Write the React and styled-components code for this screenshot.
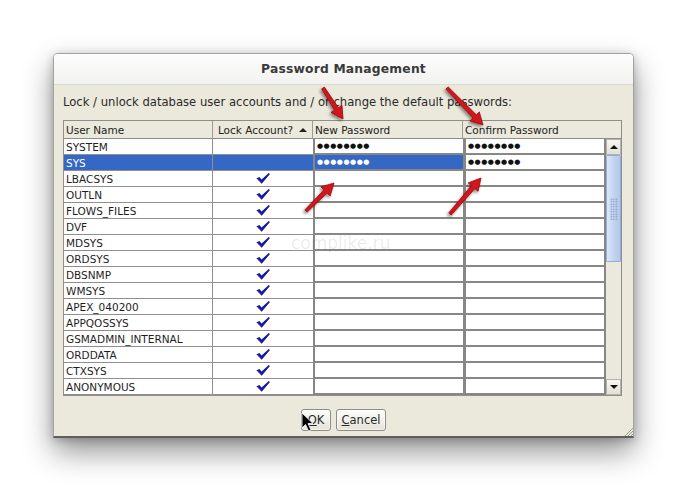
import React from "react"
import styled, { createGlobalStyle } from "styled-components"

const GlobalStyle = createGlobalStyle`
  html, body {
    margin: 0;
    padding: 0;
    background: #fff;
  }
  body {
    font-family: "DejaVu Sans", "Noto Sans", sans-serif;
    color: #222;
  }
`

const Stage = styled.div`
  position: relative;
  width: 688px;
  height: 491px;
  padding: 53px 0 0 53px;
  box-sizing: border-box;
  overflow: hidden;
`

const Window = styled.div`
  position: relative;
  width: 581px;
  height: 385px;
  box-sizing: border-box;
  display: flex;
  flex-direction: column;
  border: 1px solid #a2a2a0;
  border-bottom: 2px solid #5e5e5c;
  border-radius: 5px 5px 0 0;
  box-shadow: 0 14px 30px rgba(0, 0, 0, 0.42), 0 2px 10px rgba(0, 0, 0, 0.22);
  overflow: hidden;
`

const TitleBar = styled.div`
  height: 30px;
  flex: 0 0 30px;
  display: flex;
  align-items: center;
  justify-content: center;
  background: linear-gradient(#fdfdfd, #f2f2f0);
  border-bottom: 1px solid #dcdad0;
  font-size: 12.3px;
  font-weight: bold;
  color: #3a3a3a;
  letter-spacing: 0.2px;
`

const Body = styled.div`
  flex: 1;
  display: flex;
  flex-direction: column;
  background: #ebe9dc;
  padding: 10px 10px 0 9px;
`

const Intro = styled.div`
  font-size: 11.6px;
  line-height: 14px;
  color: #2a2a2a;
  margin-bottom: 11px;
`

const Table = styled.div`
  width: 559px;
  box-sizing: border-box;
  border: 1px solid #8e8e8c;
  background: #fff;
`

const Header = styled.div`
  display: grid;
  grid-template-columns: 149px 100px 150px 1fr;
  height: 17px;
  background: #ebe9dc;
  border-bottom: 1px solid #8e8e8c;
`

const HeadCell = styled.div`
  display: flex;
  align-items: center;
  justify-content: ${p => (p.$center ? "center" : "flex-start")};
  gap: 6px;
  padding-left: ${p => (p.$center ? "0" : "2px")};
  font-size: 10.5px;
  color: #222;
  border-right: ${p => (p.$last ? "none" : "1px solid #9c9c98")};
  white-space: nowrap;
  overflow: hidden;
`

const SortUp = styled.span`
  width: 0;
  height: 0;
  border-left: 4px solid transparent;
  border-right: 4px solid transparent;
  border-bottom: 4px solid #222;
`

const BodyArea = styled.div`
  display: flex;
`

const Rows = styled.div`
  flex: 1;
  display: grid;
  grid-template-columns: 149px 100px 150px 1fr;
  grid-auto-rows: 16px;
`

const Cell = styled.div`
  box-sizing: border-box;
  display: flex;
  align-items: center;
  justify-content: ${p => (p.$center ? "center" : "flex-start")};
  padding-left: ${p => (p.$center ? "0" : "2px")};
  font-size: 10.5px;
  color: ${p => (p.$selected ? "#fff" : "#1e1e1e")};
  background: ${p => (p.$selected ? "#3567c4" : "#fff")};
  border-bottom: 1px solid #8f8f8d;
  border-right: ${p => (p.$noRight ? "none" : "1px solid #8f8f8d")};
  white-space: nowrap;
`

const PassCell = styled.div`
  box-sizing: border-box;
  display: flex;
  align-items: center;
  padding-left: 2px;
  background: ${p => (p.$selected ? "#3567c4" : "#fff")};
  color: ${p => (p.$selected ? "#fff" : "#111")};
  border-bottom: 2px solid #878785;
  border-left: ${p => p.$left}px solid #878785;
  border-right: ${p => p.$right}px solid #878785;
`

const Dots = styled.span`
  font-size: 7px;
  letter-spacing: 0.5px;
  line-height: 1;
`

const Scrollbar = styled.div`
  width: 15px;
  display: flex;
  flex-direction: column;
  background: #ecebe3;
`

const ScrollButton = styled.div`
  height: 16px;
  flex: 0 0 16px;
  box-sizing: border-box;
  display: flex;
  align-items: center;
  justify-content: center;
  background: linear-gradient(#f7f6f1, #e3e1d6);
  border: 1px solid #b6b4aa;
`

const Arrow = styled.span`
  width: 0;
  height: 0;
  border-left: 4px solid transparent;
  border-right: 4px solid transparent;
  ${p =>
    p.$down
      ? "border-top: 4px solid #111;"
      : "border-bottom: 4px solid #111;"}
`

const Thumb = styled.div`
  height: 107px;
  flex: 0 0 107px;
  box-sizing: border-box;
  display: flex;
  align-items: center;
  justify-content: center;
  background: linear-gradient(to right, #dde7f7, #bfd1ef 60%, #b4c8ec);
  border: 1px solid #94acd6;
  border-radius: 1px;
`

const Grip = styled.div`
  width: 8px;
  height: 22px;
  background-image: radial-gradient(#8ea6cf 0.7px, transparent 1px);
  background-size: 2.5px 2.5px;
`

const Track = styled.div`
  flex: 1;
  background: #ebe9de;
`

const ButtonRow = styled.div`
  display: flex;
  justify-content: center;
  gap: 5px;
  margin-top: 13px;
  padding-left: 1px;
`

const Button = styled.button`
  height: 22px;
  width: ${p => p.$w}px;
  padding: 0;
  font-family: "DejaVu Sans", sans-serif;
  font-size: 11.5px;
  color: #2a2a2a;
  background: linear-gradient(#fdfdfb, #e5e3d9);
  border: 1px solid #8c8b86;
  border-radius: 3px;
  box-shadow: inset 0 0 0 1px rgba(255, 255, 255, 0.6);
  u {
    text-decoration: underline;
  }
`

const Grab = styled.svg`
  position: absolute;
  right: 0;
  bottom: 0;
`

const Overlay = styled.svg`
  position: absolute;
  left: 0;
  top: 0;
  pointer-events: none;
`

const Watermark = styled.div`
  position: absolute;
  left: 291px;
  top: 233px;
  font-size: 17px;
  color: rgba(0, 0, 0, 0.09);
  pointer-events: none;
`

const users = [
  "SYSTEM",
  "SYS",
  "LBACSYS",
  "OUTLN",
  "FLOWS_FILES",
  "DVF",
  "MDSYS",
  "ORDSYS",
  "DBSNMP",
  "WMSYS",
  "APEX_040200",
  "APPQOSSYS",
  "GSMADMIN_INTERNAL",
  "ORDDATA",
  "CTXSYS",
  "ANONYMOUS",
]

function Check() {
  return (
    <svg width="14" height="11" viewBox="0 0 14 11">
      <path d="M0.4 5.3 L3.4 3.9 L5.6 6.6 L12.7 0 L14 1.1 L5.7 10.8 Z" fill="#1b1b9e" />
    </svg>
  )
}

function arrowPoints(x1, y1, x2, y2) {
  const dx = x2 - x1
  const dy = y2 - y1
  const len = Math.hypot(dx, dy)
  const ux = dx / len
  const uy = dy / len
  const nx = -uy
  const ny = ux
  const head = 12
  const hw = 6.5
  const sw = 2.3
  const bx = x2 - ux * head
  const by = y2 - uy * head
  const pts = [
    [x1 + nx * sw * 0.7, y1 + ny * sw * 0.7],
    [bx + nx * sw, by + ny * sw],
    [bx + nx * hw, by + ny * hw],
    [x2, y2],
    [bx - nx * hw, by - ny * hw],
    [bx - nx * sw, by - ny * sw],
    [x1 - nx * sw * 0.7, y1 - ny * sw * 0.7],
  ]
  return pts.map(p => p.map(v => v.toFixed(1)).join(",")).join(" ")
}

const arrows = [
  [323, 88, 343, 119],
  [447, 88, 483, 125],
  [306, 211, 334, 183],
  [450, 214, 481, 178],
]

export default function App() {
  return (
    <Stage>
      <GlobalStyle />
      <Window>
        <TitleBar>Password Management</TitleBar>
        <Body>
          <Intro>
            Lock / unlock database user accounts and / or change the default passwords:
          </Intro>
          <Table>
            <Header>
              <HeadCell>User Name</HeadCell>
              <HeadCell $center>
                Lock Account? <SortUp />
              </HeadCell>
              <HeadCell>New Password</HeadCell>
              <HeadCell $last>Confirm Password</HeadCell>
            </Header>
            <BodyArea>
              <Rows>
                {users.map((name, i) => {
                  const sel = name === "SYS"
                  const hasPass = i < 2
                  return (
                    <React.Fragment key={name}>
                      <Cell $selected={sel}>{name}</Cell>
                      <Cell $selected={sel} $center $noRight>
                        {i > 1 && <Check />}
                      </Cell>
                      <PassCell $selected={sel} $left={2} $right={0}>
                        {hasPass && <Dots>●●●●●●●●</Dots>}
                      </PassCell>
                      <PassCell $left={3} $right={2}>
                        {hasPass && <Dots>●●●●●●●●</Dots>}
                      </PassCell>
                    </React.Fragment>
                  )
                })}
              </Rows>
              <Scrollbar>
                <ScrollButton>
                  <Arrow />
                </ScrollButton>
                <Thumb>
                  <Grip />
                </Thumb>
                <Track />
                <ScrollButton>
                  <Arrow $down />
                </ScrollButton>
              </Scrollbar>
            </BodyArea>
          </Table>
          <ButtonRow>
            <Button $w={30}>
              <u>O</u>K
            </Button>
            <Button $w={50}>
              <u>C</u>ancel
            </Button>
          </ButtonRow>
        </Body>
        <Grab width="9" height="9" viewBox="0 0 9 9">
          <path d="M9 1 L1 9 M9 4 L4 9 M9 7 L7 9" stroke="#9a9890" strokeWidth="1" />
        </Grab>
      </Window>
      <Watermark>complike.ru</Watermark>
      <Overlay width="688" height="491" viewBox="0 0 688 491">
        <defs>
          <filter id="sh" x="-30%" y="-30%" width="160%" height="160%">
            <feDropShadow dx="-1.5" dy="2" stdDeviation="1.6" floodColor="#000" floodOpacity="0.45" />
          </filter>
        </defs>
        {arrows.map((a, i) => (
          <polygon
            key={i}
            points={arrowPoints(...a)}
            fill="#d3131f"
            stroke="#8e0b12"
            strokeWidth="0.8"
            strokeLinejoin="round"
            filter="url(#sh)"
          />
        ))}
        <path
          d="M302 413 L302 428 L305.5 424.5 L308.5 431 L311 430 L308 423.5 L313 423.5 Z"
          fill="#000"
          stroke="#fff"
          strokeWidth="0.8"
        />
      </Overlay>
    </Stage>
  )
}
